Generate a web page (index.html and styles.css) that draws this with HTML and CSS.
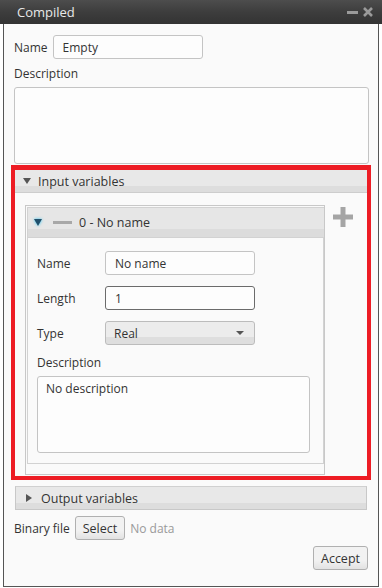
FILE: index.html
```html
<!DOCTYPE html>
<html lang="en">
<head>
  <meta charset="UTF-8">
  <title>Compiled</title>
  <link rel="stylesheet" href="styles.css">
</head>
<body>
  <div class="titlebar">
    <span class="title">Compiled</span>
    <span class="win-btns">
      <span class="win-min"></span>
      <svg class="win-close" width="10" height="10" viewBox="0 0 10 10">
        <path d="M1 1 L9 9 M9 1 L1 9" stroke="#9a9a9a" stroke-width="2.6"/>
      </svg>
    </span>
  </div>
  <div class="window">
    <div class="row name-row">
      <label>Name</label>
      <input type="text" class="field name-field" value="Empty">
    </div>
    <div class="label-line">Description</div>
    <textarea class="field desc"></textarea>

    <div class="highlight">
      <div class="section">
        <div class="section-head"><span class="tri-down"></span>Input variables</div>
        <div class="section-body">
          <div class="item">
            <div class="item-head">
              <span class="tri-blue"></span>
              <span class="minus"></span>
              <span>0 - No name</span>
            </div>
            <div class="item-form">
              <div class="frow"><label>Name</label><input type="text" class="field wide" value="No name"></div>
              <div class="frow"><label>Length</label><input type="text" class="field wide focus" value="1"></div>
              <div class="frow"><label>Type</label><div class="combo">Real<span class="combo-arrow"></span></div></div>
              <div class="label-line inner">Description</div>
              <textarea class="field desc small">No description</textarea>
            </div>
            <div class="item-foot"></div>
          </div>
          <svg class="plus" width="20" height="20" viewBox="0 0 20 20">
            <rect x="7.5" y="0" width="5" height="20" fill="#a5a5a5"/>
            <rect x="0" y="7.5" width="20" height="5" fill="#a5a5a5"/>
          </svg>
        </div>
      </div>
    </div>

    <div class="section closed">
      <div class="section-head"><span class="tri-right"></span>Output variables</div>
    </div>

    <div class="row bin-row">
      <label>Binary file</label>
      <button class="btn">Select</button>
      <span class="muted">No data</span>
    </div>
    <div class="actions">
      <button class="btn">Accept</button>
    </div>
  </div>
</body>
</html>
```

FILE: styles.css
```css
html, body {
  margin: 0;
  padding: 0;
  background: #ffffff;
}
body {
  font-family: "Open Sans", "Noto Sans", sans-serif;
  font-size: 12px;
  color: #333;
  width: 382px;
  height: 588px;
}
.titlebar {
  height: 24px;
  background: linear-gradient(#4d4d4d, #3d3d3d 50%, #333 100%);
  display: flex;
  align-items: center;
  justify-content: space-between;
  padding: 0 9px 0 17px;
  box-sizing: border-box;
  color: #e8e8e8;
  font-size: 13px;
}
.win-btns {
  display: flex;
  align-items: center;
  gap: 5px;
}
.win-min {
  width: 11px;
  height: 3px;
  background: #9a9a9a;
  margin-top: 1px;
}
.win-close {
  display: block;
}
.window {
  margin: 0 3px;
  height: 563px;
  border: 1px solid #555;
  border-top: none;
  background: #fafafa;
  padding: 11px 10px 0 10px;
  box-sizing: border-box;
}
.row {
  display: flex;
  align-items: center;
}
.name-row {
  gap: 5px;
  height: 24px;
}
.field {
  font-family: inherit;
  font-size: 12px;
  color: #333;
  border: 1px solid #c4c4c4;
  border-radius: 3px;
  background: #fdfdfd;
  box-sizing: border-box;
  outline: none;
}
input.field {
  height: 24px;
  padding: 0 9px;
}
.name-field {
  width: 150px;
}
.label-line {
  height: 14px;
  line-height: 14px;
  margin: 8px 0 6px;
}
textarea.field {
  display: block;
  resize: none;
  padding: 3px 8px;
}
.desc {
  width: 355px;
  height: 77px;
}
.highlight {
  margin: 1px -3px 0;
  border: 4px solid #ed1c24;
  border-top-width: 5px;
}
.section {
  border: 1px solid #c8c8c8;
  border-top: none;
}
.highlight .section {
  border: none;
}
.section-head {
  height: 22px;
  background: linear-gradient(#e8e8e8 72%, #dddddd 72%);
  border-bottom: 1px solid #cdcdcd;
  display: flex;
  align-items: center;
  padding-left: 8px;
  font-size: 12.5px;
}
.tri-down {
  width: 0;
  height: 0;
  border-left: 4px solid transparent;
  border-right: 4px solid transparent;
  border-top: 6px solid #555;
  margin-right: 7px;
}
.tri-right {
  width: 0;
  height: 0;
  border-top: 4px solid transparent;
  border-bottom: 4px solid transparent;
  border-left: 6px solid #555;
  margin-right: 9px;
  margin-left: 2px;
}
.section-body {
  display: flex;
  align-items: flex-start;
  padding: 12px 0 0 10px;
  height: 283px;
  box-sizing: border-box;
}
.item {
  width: 300px;
  height: 270px;
  border: 1px solid #c8c8c8;
  box-sizing: border-box;
  padding: 1px 0 0 1px;
  display: flex;
  flex-direction: column;
}
.item-head {
  height: 29px;
  flex: none;
  background: linear-gradient(#e6e6e6 72%, #dcdcdc 72%);
  border: 1px solid #d2d2d2;
  border-right: none;
  display: flex;
  align-items: center;
  padding-left: 6px;
  font-size: 12.5px;
}
.tri-blue {
  width: 0;
  height: 0;
  border-left: 4px solid transparent;
  border-right: 4px solid transparent;
  border-top: 7px solid #1f4f6b;
  filter: drop-shadow(0 0 1.5px #36c6f4);
  margin-right: 11px;
}
.minus {
  width: 19px;
  height: 3px;
  background: #a8a8a8;
  margin-right: 7px;
}
.item-form {
  flex: 1;
  border: 1px solid #d2d2d2;
  border-top: none;
  padding: 13px 0 10px 9px;
  display: flex;
  flex-direction: column;
  gap: 11px;
}
.item-foot {
  height: 11px;
  flex: none;
}
.frow {
  display: flex;
  align-items: center;
  height: 24px;
}
.frow label {
  width: 68px;
}
.wide {
  width: 150px;
}
.focus {
  border-color: #6b6b6b;
}
.combo {
  width: 150px;
  height: 24px;
  box-sizing: border-box;
  border: 1px solid #bcbcbc;
  border-radius: 3px;
  background: linear-gradient(#ececec 70%, #dedede 70%);
  display: flex;
  align-items: center;
  justify-content: space-between;
  padding: 0 10px 0 8px;
}
.combo-arrow {
  width: 0;
  height: 0;
  border-left: 4px solid transparent;
  border-right: 4px solid transparent;
  border-top: 4px solid #555;
}
.label-line.inner {
  margin: 0;
}
.desc.small {
  width: 273px;
  height: 77px;
  margin-top: -5px;
}
.plus {
  margin-left: 8px;
  margin-top: 2px;
}
.closed {
  margin: 6px 0 0 1px;
  width: 352px;
  box-sizing: border-box;
  border-top: 1px solid #d0d0d0;
}
.closed .section-head {
  height: 22px;
  border-bottom: none;
}
.bin-row {
  gap: 5px;
  margin-top: 6px;
}
.btn {
  font-family: inherit;
  font-size: 12.5px;
  color: #333;
  height: 24px;
  padding: 0 7px;
  border: 1px solid #b0b0b0;
  border-radius: 3px;
  background: linear-gradient(#f2f2f2 60%, #e2e2e2);
}
.muted {
  color: #999;
}
.actions {
  display: flex;
  justify-content: flex-end;
  margin-top: 6px;
}
```
